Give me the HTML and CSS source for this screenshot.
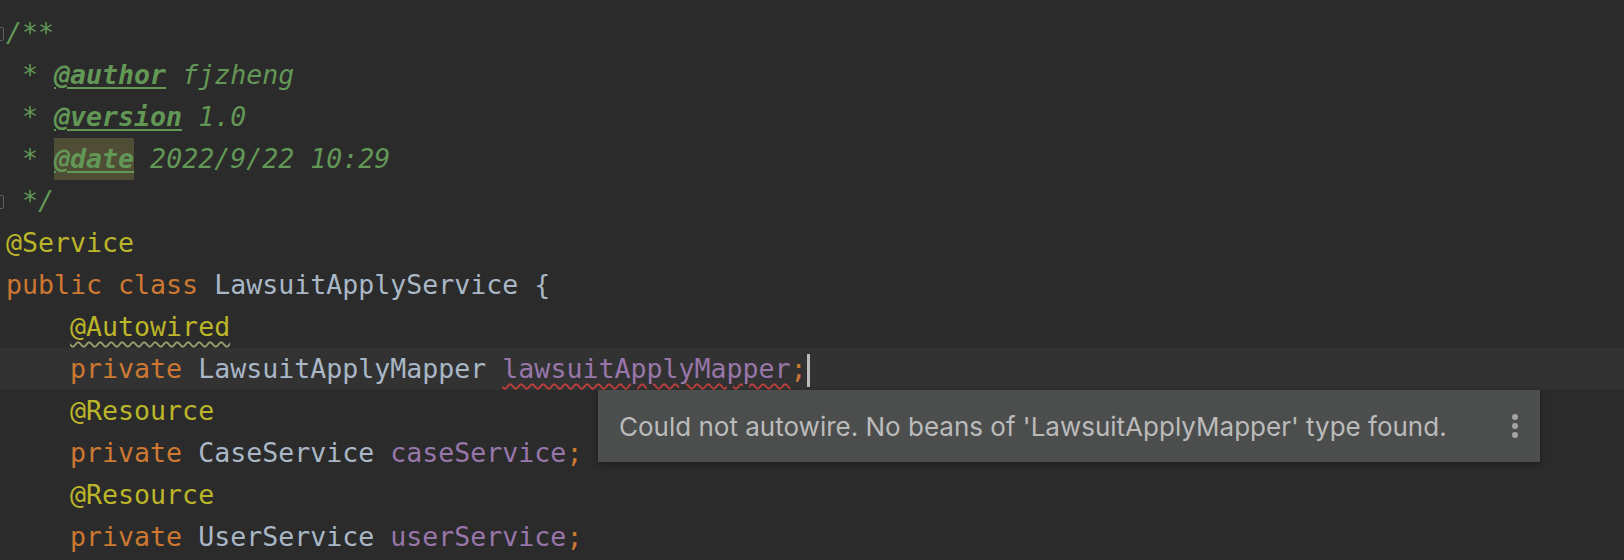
FILE: index.html
```html
<!DOCTYPE html>
<html>
<head>
  <title>LawsuitApplyService.java</title>
  <link rel="stylesheet" href="styles.css">
</head>
<body>
  <div class="editor">
    <div class="line fold"><span class="comment">/**</span></div>
    <div class="line"><span class="comment"> * <span class="tag">@author</span> fjzheng</span></div>
    <div class="line"><span class="comment"> * <span class="tag">@version</span> 1.0</span></div>
    <div class="line"><span class="comment"> * <span class="tag match">@date</span> 2022/9/22 10:29</span></div>
    <div class="line fold"><span class="comment"> */</span></div>
    <div class="line"><span class="anno">@Service</span></div>
    <div class="line"><span class="kw">public class</span> LawsuitApplyService {</div>
    <div class="line">    <span class="anno warn">@Autowired</span></div>
    <div class="line current">    <span class="kw">private</span> LawsuitApplyMapper <span class="field error">lawsuitApplyMapper</span><span class="kw">;</span><span class="caret"></span></div>
    <div class="line">    <span class="anno">@Resource</span></div>
    <div class="line">    <span class="kw">private</span> CaseService <span class="field">caseService</span><span class="kw">;</span></div>
    <div class="line">    <span class="anno">@Resource</span></div>
    <div class="line">    <span class="kw">private</span> UserService <span class="field">userService</span><span class="kw">;</span></div>

    <div class="tooltip">
      <span class="tooltip-text">Could not autowire. No beans of 'LawsuitApplyMapper' type found.</span>
      <span class="more"><i></i><i></i><i></i></span>
    </div>
  </div>
</body>
</html>
```

FILE: styles.css
```css
body {
  margin: 0;
  background-color: #2b2b2b;
  overflow: hidden;
}

.editor {
  position: relative;
  height: 560px;
  padding-top: 12px;
  box-sizing: border-box;
  font-family: "DejaVu Sans Mono", monospace;
  font-size: 26.6px;
  color: #a9b7c6;
}

.line {
  position: relative;
  height: 42px;
  line-height: 42px;
  padding-left: 6px;
  white-space: pre;
}

.line.current {
  background-color: #323232;
}

.fold::before {
  content: "";
  position: absolute;
  left: -6px;
  top: 15px;
  width: 8px;
  height: 12px;
  border: 1.5px solid #5e5e5e;
  border-radius: 2px;
}

.comment {
  color: #629755;
  font-style: italic;
}

.tag {
  font-weight: bold;
  text-decoration: underline;
  text-decoration-thickness: 2px;
  text-underline-offset: 3px;
}

.match {
  display: inline-block;
  background-color: #4f4d36;
}

.anno {
  color: #bbb529;
}

.kw {
  color: #cc7832;
}

.field {
  color: #9876aa;
}

.warn {
  text-decoration: underline wavy #9b9a6e;
  text-decoration-thickness: 1.5px;
  text-underline-offset: 5px;
}

.error {
  text-decoration: underline wavy #bc3f3c;
  text-decoration-thickness: 1.5px;
  text-underline-offset: 5px;
}

.caret {
  display: inline-block;
  width: 3px;
  height: 33px;
  vertical-align: middle;
  background-color: #bbbbbb;
}

.tooltip {
  position: absolute;
  left: 598px;
  top: 390px;
  width: 942px;
  height: 72px;
  box-sizing: border-box;
  padding: 0 22px 0 21px;
  display: flex;
  align-items: center;
  justify-content: space-between;
  background-color: #4c4e4e;
  box-shadow: 0 2px 6px rgba(0, 0, 0, 0.35);
  font-family: Inter, "Noto Sans", sans-serif;
  font-size: 26px;
  color: #bbbbbb;
}

.more {
  display: flex;
  flex-direction: column;
  gap: 3px;
}

.more i {
  width: 6px;
  height: 6px;
  border-radius: 50%;
  background-color: #a4a4a4;
}
```
